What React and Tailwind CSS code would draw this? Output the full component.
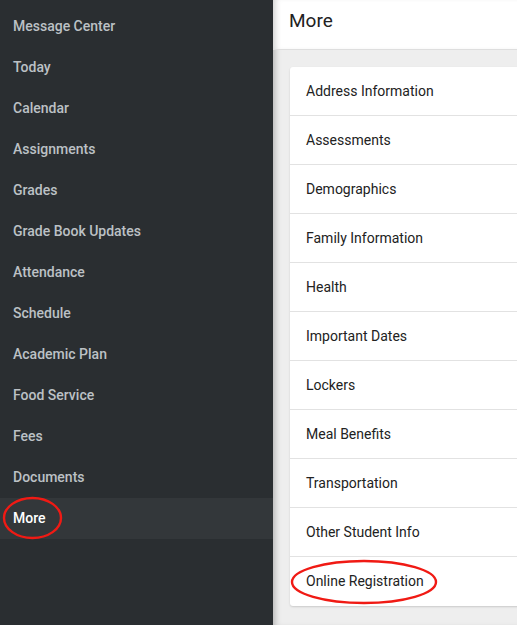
import React from "react";

const nav = [
  "Message Center",
  "Today",
  "Calendar",
  "Assignments",
  "Grades",
  "Grade Book Updates",
  "Attendance",
  "Schedule",
  "Academic Plan",
  "Food Service",
  "Fees",
  "Documents",
  "More",
];

const items = [
  "Address Information",
  "Assessments",
  "Demographics",
  "Family Information",
  "Health",
  "Important Dates",
  "Lockers",
  "Meal Benefits",
  "Transportation",
  "Other Student Info",
  "Online Registration",
];

function Ellipse({ className, w, h }) {
  return (
    <svg
      className={className}
      width={w}
      height={h}
      viewBox={`0 0 ${w} ${h}`}
      fill="none"
    >
      <ellipse
        cx={w / 2}
        cy={h / 2}
        rx={w / 2 - 2}
        ry={h / 2 - 2}
        stroke="#f01a14"
        strokeWidth="2.4"
      />
    </svg>
  );
}

export default function App() {
  return (
    <div
      className="relative flex h-[625px] w-[517px] overflow-hidden"
      style={{ fontFamily: "Roboto, 'Noto Sans', sans-serif" }}
    >
      <aside className="w-[273px] shrink-0 bg-[#2a2e31] pt-[6px]">
        {nav.map((n) => (
          <div
            key={n}
            className={
              "flex h-[41px] items-center px-[13px] text-[14px] font-medium " +
              (n === "More" ? "bg-[#33373a] text-white" : "text-[#bcc1c5]")
            }
          >
            {n}
          </div>
        ))}
      </aside>
      <main className="relative flex-1 min-w-0 bg-[#eeeeee] shadow-[inset_6px_0_6px_-4px_rgba(0,0,0,0.25)]">
        <div className="flex h-[50px] items-center border-b border-[#dedede] bg-white pl-[16px] pb-[7px] text-[19px] text-[#222] shadow-[inset_6px_0_6px_-4px_rgba(0,0,0,0.2)]">
          More
        </div>
        <div className="ml-[17px] mt-[17px] w-[300px] rounded-[3px] bg-white shadow-[0_1px_2px_rgba(0,0,0,0.15)]">
          {items.map((it, i) => (
            <div
              key={it}
              className={
                "flex h-[49px] items-center px-[16px] text-[14px] text-[#222] " +
                (i < items.length - 1 ? "border-b border-[#e2e2e2]" : "")
              }
            >
              {it}
            </div>
          ))}
        </div>
      </main>
      <Ellipse className="absolute left-[2px] top-[496px]" w={61} h={44} />
      <Ellipse className="absolute left-[290px] top-[559px]" w={148} h={46} />
    </div>
  );
}
